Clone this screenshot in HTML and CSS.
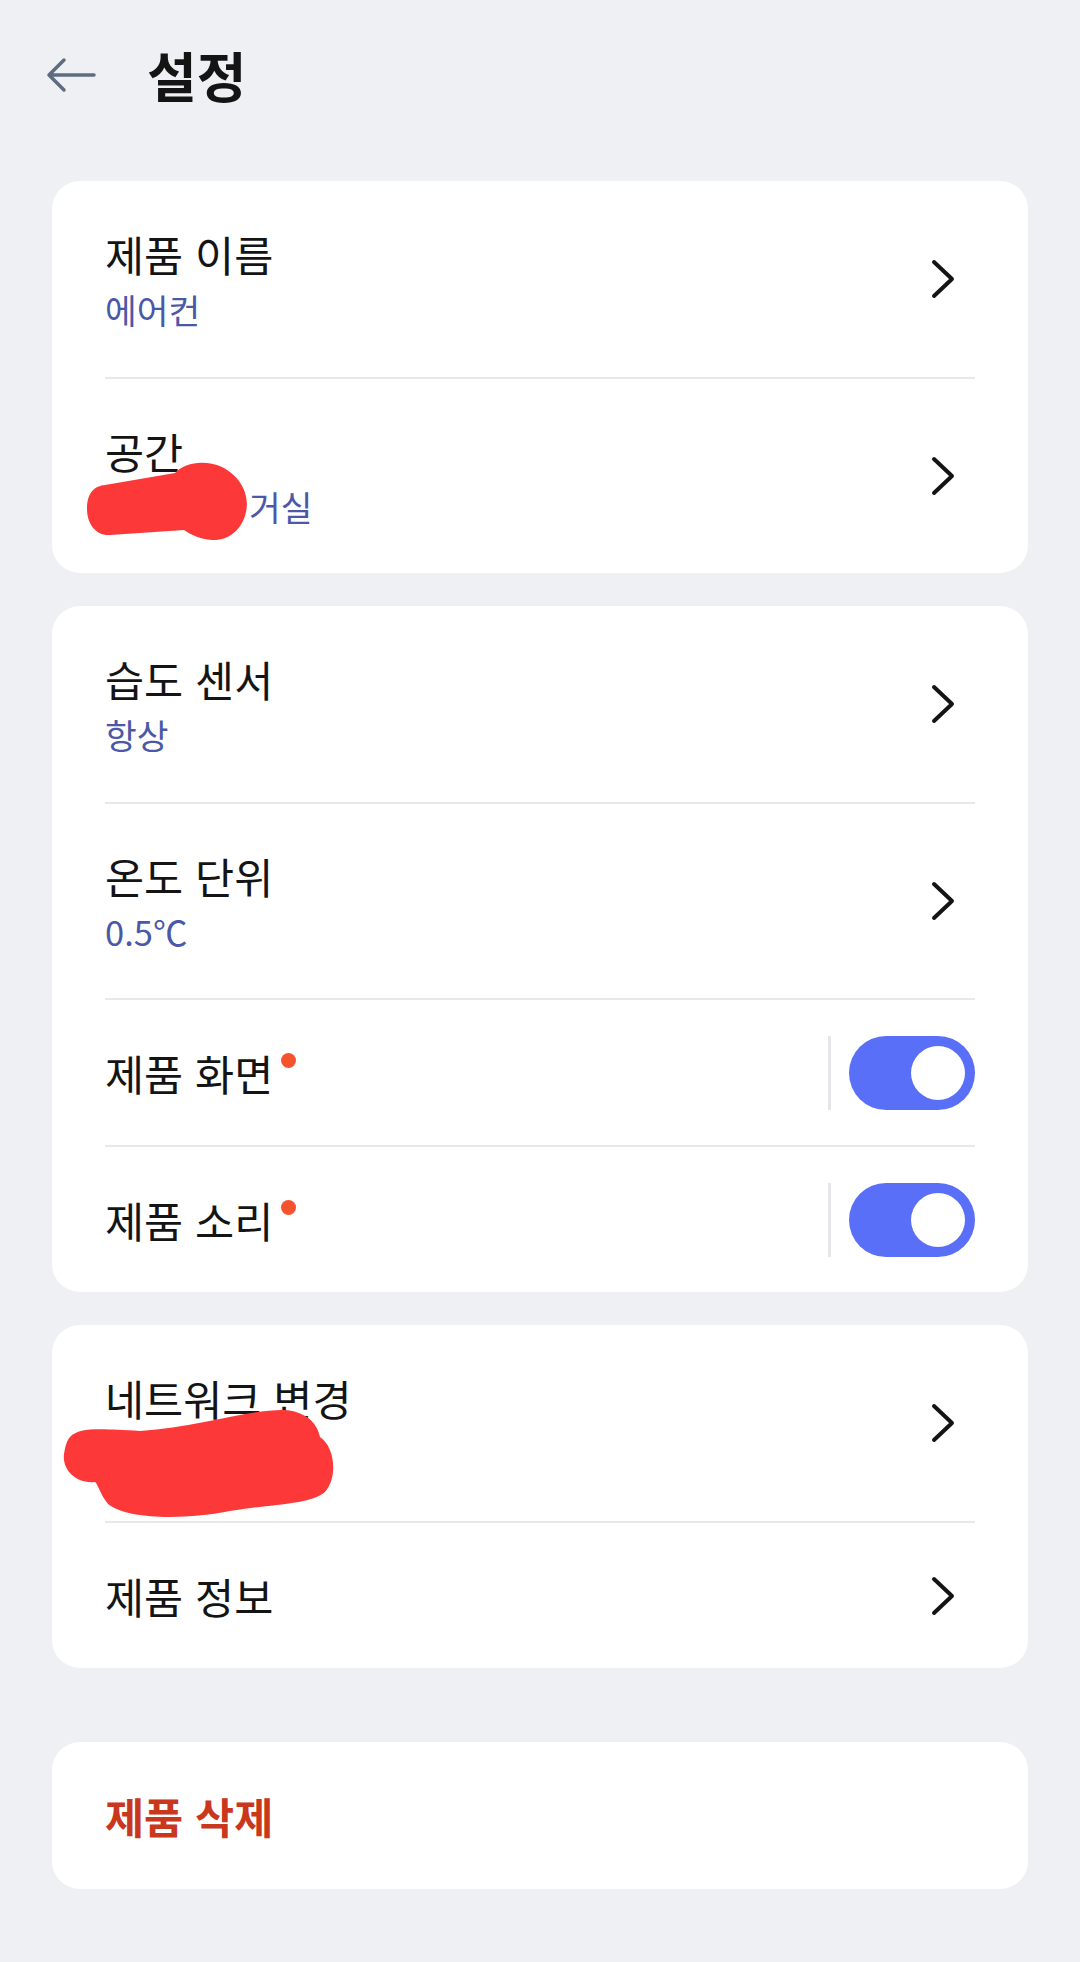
FILE: index.html
```html
<!DOCTYPE html>
<html lang="ko">
<head>
    <meta charset="UTF-8">
    <meta name="viewport" content="width=device-width, initial-scale=1.0">
    <title>설정</title>
    <link rel="stylesheet" href="styles.css">
</head>
<body>
    <header class="topbar">
        <svg class="back" viewBox="0 0 52 52" fill="none" stroke="#5f6c80" stroke-width="3.5" stroke-linecap="round" stroke-linejoin="round">
            <path d="M4 26H49M19 11L4 26L19 41"/>
        </svg>
        <h1>설정</h1>
    </header>

    <main class="list">
        <section class="card">
            <div class="row two">
                <div class="text">
                    <div class="label">제품 이름</div>
                    <div class="value">에어컨</div>
                </div>
                <svg class="chevron" viewBox="0 0 64 64" fill="none" stroke="#141414" stroke-width="4" stroke-linecap="round" stroke-linejoin="round"><path d="M23 15L41 32L23 49"/></svg>
            </div>
            <div class="row two">
                <div class="text">
                    <div class="label">공간</div>
                    <div class="value"><span class="redacted"></span>거실</div>
                </div>
                <svg class="chevron" viewBox="0 0 64 64" fill="none" stroke="#141414" stroke-width="4" stroke-linecap="round" stroke-linejoin="round"><path d="M23 15L41 32L23 49"/></svg>
                <!-- scribbled-out part of the screenshot -->
                <svg class="scribble" width="300" height="196" viewBox="0 0 300 196">
                    <path fill="#fd3838" d="M35 130C35 113 43 107 53 106L123 94C132 84 152 80 170 88C188 97 198 115 194 133C190 152 175 162 160 161C148 160 139 156 132 151L58 156C44 157 35 145 35 130Z"/>
                </svg>
            </div>
        </section>

        <section class="card">
            <div class="row two">
                <div class="text">
                    <div class="label">습도 센서</div>
                    <div class="value">항상</div>
                </div>
                <svg class="chevron" viewBox="0 0 64 64" fill="none" stroke="#141414" stroke-width="4" stroke-linecap="round" stroke-linejoin="round"><path d="M23 15L41 32L23 49"/></svg>
            </div>
            <div class="row two">
                <div class="text">
                    <div class="label">온도 단위</div>
                    <div class="value">0.5℃</div>
                </div>
                <svg class="chevron" viewBox="0 0 64 64" fill="none" stroke="#141414" stroke-width="4" stroke-linecap="round" stroke-linejoin="round"><path d="M23 15L41 32L23 49"/></svg>
            </div>
            <div class="row">
                <div class="text">
                    <div class="label">제품 화면<span class="dot"></span></div>
                </div>
                <div class="switch-wrap">
                    <span class="sep"></span>
                    <span class="switch on"></span>
                </div>
            </div>
            <div class="row">
                <div class="text">
                    <div class="label">제품 소리<span class="dot"></span></div>
                </div>
                <div class="switch-wrap">
                    <span class="sep"></span>
                    <span class="switch on"></span>
                </div>
            </div>
        </section>

        <section class="card">
            <div class="row two">
                <div class="text">
                    <div class="label">네트워크 변경</div>
                    <div class="value blank"></div>
                </div>
                <svg class="chevron" viewBox="0 0 64 64" fill="none" stroke="#141414" stroke-width="4" stroke-linecap="round" stroke-linejoin="round"><path d="M23 15L41 32L23 49"/></svg>
                <svg class="scribble" width="300" height="196" viewBox="0 0 300 196">
                    <path fill="#fd3838" d="M18 112C28 102 48 104 88 106C148 102 198 84 233 85C258 87 266 102 268 112C283 122 286 152 273 167C258 180 218 179 178 186C138 194 78 196 56 179C48 169 46 159 43 157C23 159 10 144 12 129C13 122 15 115 18 112Z"/>
                </svg>
            </div>
            <div class="row">
                <div class="text">
                    <div class="label">제품 정보</div>
                </div>
                <svg class="chevron" viewBox="0 0 64 64" fill="none" stroke="#141414" stroke-width="4" stroke-linecap="round" stroke-linejoin="round"><path d="M23 15L41 32L23 49"/></svg>
            </div>
        </section>

        <section class="card danger">
            <div class="row">
                <div class="text">
                    <div class="label delete">제품 삭제</div>
                </div>
            </div>
        </section>
    </main>
</body>
</html>
```

FILE: styles.css
```css
body {
    margin: 0;
    background-color: #eff0f4;
    font-family: "Noto Sans CJK KR", "Noto Sans", sans-serif;
    color: #141414;
}
.topbar {
    display: flex;
    align-items: center;
    height: 150px;
    padding-left: 45px;
}
.back {
    width: 52px;
    height: 52px;
}
.topbar h1 {
    margin: 0 0 0 50px;
    font-size: 54px;
    font-weight: 700;
    line-height: 64px;
}
.list {
    display: flex;
    flex-direction: column;
    gap: 33px;
    padding: 31px 52px 40px;
}
.card {
    background: white;
    border-radius: 28px;
    padding: 0 53px;
}
.card.danger {
    margin-top: 41px;
}
.row {
    position: relative;
    box-sizing: border-box;
    display: flex;
    align-items: center;
    min-height: 147px;
}
.row + .row {
    border-top: 2px solid #e6e8ec;
}
.row.two {
    min-height: 196px;
}
.text {
    flex: 1;
}
.label {
    font-size: 42.5px;
    line-height: 54px;
}
.value {
    margin-top: 6px;
    font-size: 34.5px;
    line-height: 44px;
    color: #4b58a8;
}
.value.blank {
    height: 44px;
}
.redacted {
    display: inline-block;
    width: 144px;
}
.chevron {
    width: 64px;
    height: 64px;
}
.switch-wrap {
    display: flex;
    align-items: center;
}
.sep {
    width: 3px;
    height: 74px;
    margin-right: 18px;
    background: #e4e6ea;
}
.switch {
    position: relative;
    width: 126px;
    height: 74px;
    border-radius: 37px;
    background: #5a6ff7;
}
.switch.on::after {
    content: "";
    position: absolute;
    top: 10px;
    right: 10px;
    width: 54px;
    height: 54px;
    border-radius: 50%;
    background: white;
}
.dot {
    display: inline-block;
    width: 15px;
    height: 15px;
    margin: 7px 0 0 8px;
    border-radius: 50%;
    background: #f4532e;
    vertical-align: top;
}
.delete {
    font-weight: 700;
    color: #c9371c;
}
.scribble {
    position: absolute;
    top: 0;
    left: -53px;
    pointer-events: none;
}
```
